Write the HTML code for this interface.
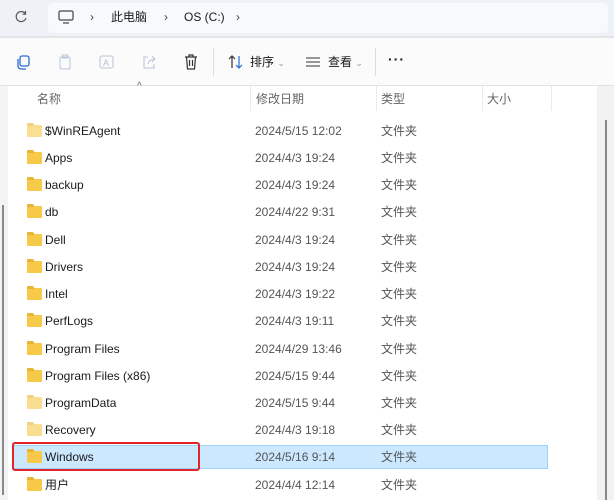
<!DOCTYPE html><html><head><meta charset="utf-8"><style>
*{margin:0;padding:0;box-sizing:border-box}
body{width:614px;height:500px;overflow:hidden;background:#fff;font-family:"Liberation Sans","Noto Sans CJK SC",sans-serif;font-size:12px;line-height:14px;color:#1a1a1a;position:relative}
.a{position:absolute}
.row{position:absolute;left:0;width:597px;height:24px}
.row .f{position:absolute;left:27px;top:6px;width:15px;height:12px;background:#f7c948;border-radius:1px}
.row .f:before{content:"";position:absolute;left:0;top:-2px;width:7px;height:3px;background:#e9b333;border-radius:1px 2px 0 0}
.row .n{position:absolute;left:45px;top:5px}
.row .d{position:absolute;left:255px;top:5px;color:#555}
.row .t{position:absolute;left:381px;top:5px;color:#555}
.g{color:#666}
</style></head><body>
<div class="a" style="left:0;top:0;width:614px;height:38px;background:#eef1f6;border-bottom:2px solid #e2e5ea"></div>
<div class="a" style="left:48px;top:3px;width:560px;height:30px;background:#f7f9fc;border-radius:4px"></div>
<svg class="a" style="left:14px;top:10px" width="14" height="14" viewBox="0 0 14 14"><path d="M11.5 4A5 5 0 1 0 12 8" fill="none" stroke="#555" stroke-width="1.2"/><path d="M11.5 1v3.2H8.5" fill="none" stroke="#555" stroke-width="1.2"/></svg>
<svg class="a" style="left:58px;top:10px" width="16" height="14" viewBox="0 0 16 14"><rect x="1" y="1" width="14" height="9" rx="1.5" fill="none" stroke="#444" stroke-width="1.2"/><path d="M5 13h6" stroke="#444" stroke-width="1.2"/></svg>
<div class="a" style="left:90px;top:10px;color:#444">›</div>
<div class="a" style="left:111px;top:10px">此电脑</div>
<div class="a" style="left:164px;top:10px;color:#444">›</div>
<div class="a" style="left:184px;top:10px">OS (C:)</div>
<div class="a" style="left:236px;top:10px;color:#444">›</div>
<div class="a" style="left:0;top:38px;width:614px;height:48px;background:#fbfbfb;border-bottom:1px solid #e3e3e3"></div>
<svg class="a" style="left:16px;top:55px" width="14" height="15" viewBox="0 0 14 15"><rect x="4" y="1" width="9" height="10" rx="2" fill="none" stroke="#2d6bd1" stroke-width="1.3"/><path d="M2 4v7a3 3 0 0 0 3 3h5" fill="none" stroke="#2d6bd1" stroke-width="1.3"/></svg>
<svg class="a" style="left:58px;top:54px" width="14" height="16" viewBox="0 0 14 16"><rect x="2" y="3" width="10" height="12" rx="1.5" fill="none" stroke="#b8c4d8"/><rect x="4.5" y="1" width="5" height="3" fill="none" stroke="#b8c4d8"/></svg>
<svg class="a" style="left:99px;top:55px" width="16" height="14" viewBox="0 0 16 14"><rect x="1" y="1" width="13" height="12" rx="2" fill="none" stroke="#b8c4d8"/><text x="4" y="11" font-size="9" fill="#b8c4d8" font-family="Liberation Sans">A</text></svg>
<svg class="a" style="left:142px;top:55px" width="15" height="14" viewBox="0 0 15 14"><path d="M6 2H2v11h10V9" fill="none" stroke="#b8c4d8"/><path d="M6 9c1-4 4-5 7-5M10 1l3 3-3 3" fill="none" stroke="#b8c4d8"/></svg>
<svg class="a" style="left:184px;top:54px" width="14" height="16" viewBox="0 0 14 16"><path d="M1 3h12M5 3V1h4v2M2.5 3l1 12h7l1-12M5.5 6v6M8.5 6v6" fill="none" stroke="#333" stroke-width="1.2"/></svg>
<div class="a" style="left:213px;top:48px;width:1px;height:28px;background:#ddd"></div>
<svg class="a" style="left:228px;top:55px" width="16" height="14" viewBox="0 0 16 14"><path d="M4 13V1M1 4l3-3 3 3" fill="none" stroke="#333" stroke-width="1.2"/><path d="M11 1v12M8 10l3 3 3-3" fill="none" stroke="#2d6bd1" stroke-width="1.2"/></svg>
<div class="a" style="left:250px;top:55px">排序 <span style="color:#999;font-size:9px">⌄</span></div>
<svg class="a" style="left:306px;top:57px" width="14" height="10" viewBox="0 0 14 10"><path d="M0 1h14M0 5h14M0 9h14" stroke="#333"/></svg>
<div class="a" style="left:328px;top:55px">查看 <span style="color:#999;font-size:9px">⌄</span></div>
<div class="a" style="left:375px;top:48px;width:1px;height:28px;background:#ddd"></div>
<div class="a" style="left:388px;top:52px;font-size:14px;font-weight:bold;letter-spacing:1px">···</div>
<div class="a" style="left:0;top:86px;width:8px;height:414px;background:#f3f3f3"></div>
<div class="a" style="left:2px;top:205px;width:2px;height:290px;background:#888"></div>
<div class="a" style="left:597px;top:86px;width:17px;height:414px;background:#f2f2f2"></div>
<div class="a" style="left:605px;top:120px;width:2px;height:380px;background:#888"></div>
<div class="a" style="left:250px;top:86px;width:1px;height:25px;background:#ebebeb"></div>
<div class="a" style="left:376px;top:86px;width:1px;height:25px;background:#ebebeb"></div>
<div class="a" style="left:482px;top:86px;width:1px;height:25px;background:#ebebeb"></div>
<div class="a" style="left:551px;top:86px;width:1px;height:25px;background:#ebebeb"></div>
<div class="a g" style="left:137px;top:80px;font-size:10px">^</div>
<div class="a g" style="left:37px;top:92px">名称</div>
<div class="a g" style="left:256px;top:92px">修改日期</div>
<div class="a g" style="left:381px;top:92px">类型</div>
<div class="a g" style="left:487px;top:92px">大小</div>
<div class="a" style="left:12px;top:445px;width:536px;height:24px;background:#cce8ff;border:1px solid #99d1ff"></div>
<div class="row" style="top:119px"><div class="f" style="opacity:.6"></div><div class="n">$WinREAgent</div><div class="d">2024/5/15 12:02</div><div class="t">文件夹</div></div>
<div class="row" style="top:146px"><div class="f"></div><div class="n">Apps</div><div class="d">2024/4/3 19:24</div><div class="t">文件夹</div></div>
<div class="row" style="top:173px"><div class="f"></div><div class="n">backup</div><div class="d">2024/4/3 19:24</div><div class="t">文件夹</div></div>
<div class="row" style="top:200px"><div class="f"></div><div class="n">db</div><div class="d">2024/4/22 9:31</div><div class="t">文件夹</div></div>
<div class="row" style="top:228px"><div class="f"></div><div class="n">Dell</div><div class="d">2024/4/3 19:24</div><div class="t">文件夹</div></div>
<div class="row" style="top:255px"><div class="f"></div><div class="n">Drivers</div><div class="d">2024/4/3 19:24</div><div class="t">文件夹</div></div>
<div class="row" style="top:282px"><div class="f"></div><div class="n">Intel</div><div class="d">2024/4/3 19:22</div><div class="t">文件夹</div></div>
<div class="row" style="top:309px"><div class="f"></div><div class="n">PerfLogs</div><div class="d">2024/4/3 19:11</div><div class="t">文件夹</div></div>
<div class="row" style="top:337px"><div class="f"></div><div class="n">Program Files</div><div class="d">2024/4/29 13:46</div><div class="t">文件夹</div></div>
<div class="row" style="top:364px"><div class="f"></div><div class="n">Program Files (x86)</div><div class="d">2024/5/15 9:44</div><div class="t">文件夹</div></div>
<div class="row" style="top:391px"><div class="f" style="opacity:.6"></div><div class="n">ProgramData</div><div class="d">2024/5/15 9:44</div><div class="t">文件夹</div></div>
<div class="row" style="top:418px"><div class="f" style="opacity:.6"></div><div class="n">Recovery</div><div class="d">2024/4/3 19:18</div><div class="t">文件夹</div></div>
<div class="row" style="top:445px"><div class="f"></div><div class="n">Windows</div><div class="d">2024/5/16 9:14</div><div class="t">文件夹</div></div>
<div class="row" style="top:473px"><div class="f"></div><div class="n">用户</div><div class="d">2024/4/4 12:14</div><div class="t">文件夹</div></div>
<div class="a" style="left:12px;top:442px;width:188px;height:29px;border:2px solid #e0262b;border-radius:3px"></div>
</body></html>
